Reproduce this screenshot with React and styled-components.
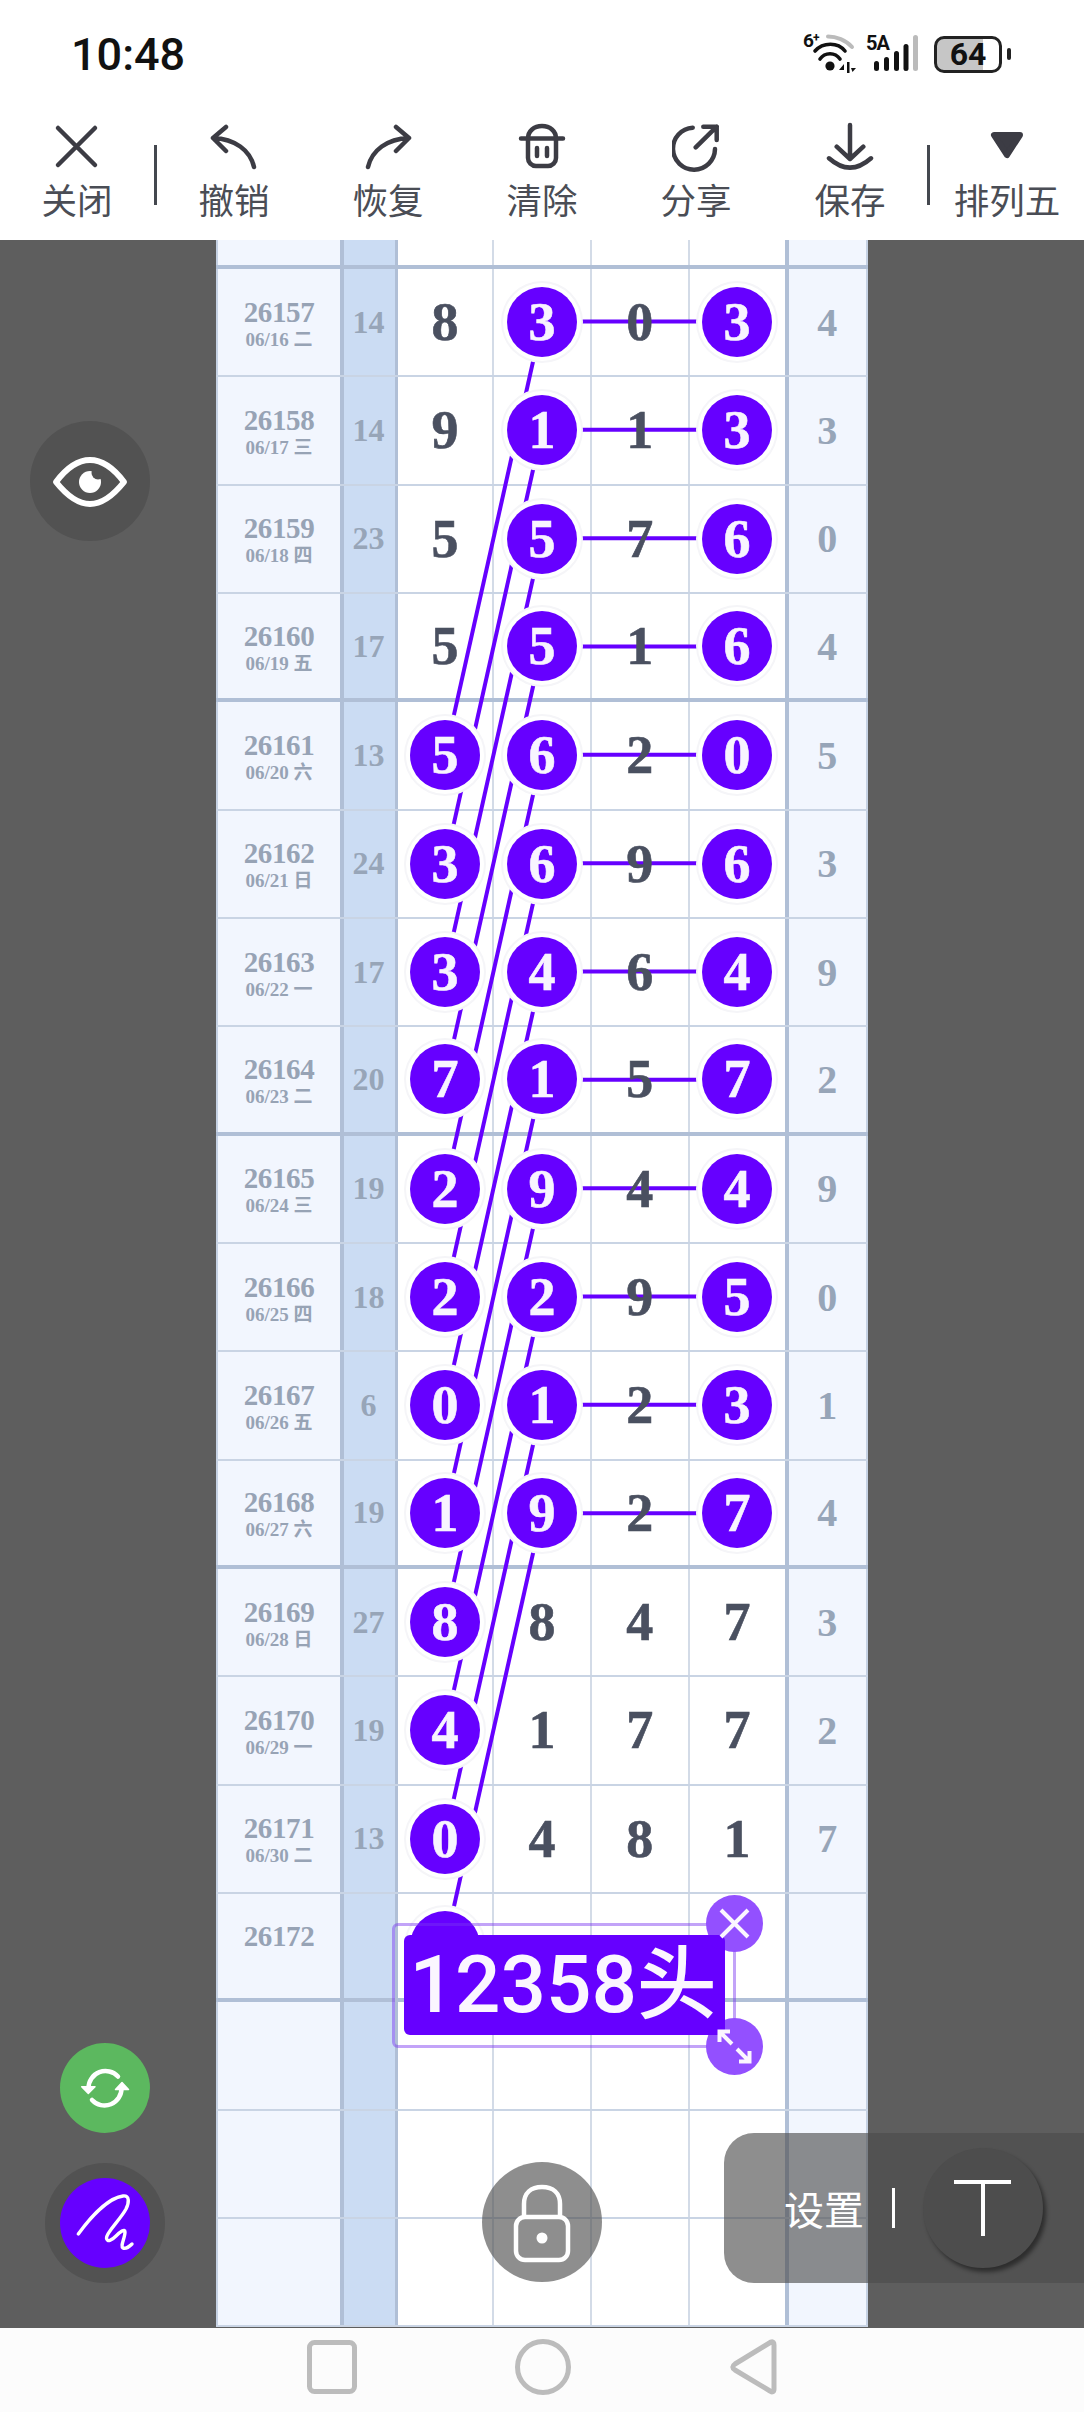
import styled, { createGlobalStyle } from "styled-components";

const ROW_H = 108.33;
const TOP_STUB = 29;
const COL1 = 229;
const COL2 = 326;
const COL4 = 521;

const draws = [
  { id: "26157", date: "06/16 二", sum: "14", nums: ["8", "3", "0", "3"], hits: [1, 3], tail: "4" },
  { id: "26158", date: "06/17 三", sum: "14", nums: ["9", "1", "1", "3"], hits: [1, 3], tail: "3" },
  { id: "26159", date: "06/18 四", sum: "23", nums: ["5", "5", "7", "6"], hits: [1, 3], tail: "0" },
  { id: "26160", date: "06/19 五", sum: "17", nums: ["5", "5", "1", "6"], hits: [1, 3], tail: "4" },
  { id: "26161", date: "06/20 六", sum: "13", nums: ["5", "6", "2", "0"], hits: [0, 1, 3], tail: "5" },
  { id: "26162", date: "06/21 日", sum: "24", nums: ["3", "6", "9", "6"], hits: [0, 1, 3], tail: "3" },
  { id: "26163", date: "06/22 一", sum: "17", nums: ["3", "4", "6", "4"], hits: [0, 1, 3], tail: "9" },
  { id: "26164", date: "06/23 二", sum: "20", nums: ["7", "1", "5", "7"], hits: [0, 1, 3], tail: "2" },
  { id: "26165", date: "06/24 三", sum: "19", nums: ["2", "9", "4", "4"], hits: [0, 1, 3], tail: "9" },
  { id: "26166", date: "06/25 四", sum: "18", nums: ["2", "2", "9", "5"], hits: [0, 1, 3], tail: "0" },
  { id: "26167", date: "06/26 五", sum: "6", nums: ["0", "1", "2", "3"], hits: [0, 1, 3], tail: "1" },
  { id: "26168", date: "06/27 六", sum: "19", nums: ["1", "9", "2", "7"], hits: [0, 1, 3], tail: "4" },
  { id: "26169", date: "06/28 日", sum: "27", nums: ["8", "8", "4", "7"], hits: [0], tail: "3" },
  { id: "26170", date: "06/29 一", sum: "19", nums: ["4", "1", "7", "7"], hits: [0], tail: "2" },
  { id: "26171", date: "06/30 二", sum: "13", nums: ["0", "4", "8", "1"], hits: [0], tail: "7" },
  { id: "26172", date: "", sum: "", nums: ["", "", "", ""], hits: [0], tail: "" },
  { id: "", date: "", sum: "", nums: ["", "", "", ""], hits: [], tail: "" },
  { id: "", date: "", sum: "", nums: ["", "", "", ""], hits: [], tail: "" },
  { id: "", date: "", sum: "", nums: ["", "", "", ""], hits: [], tail: "" },
];

const rowY = (i) => TOP_STUB + ROW_H * i + 52.5;

export default function App() {
  return (
    <Page>
      <GlobalStyle />
      <StatusBar>
        <Clock>10:48</Clock>
        <StatusIcons>
          <svg width="56" height="64" viewBox="0 -10 56 64">
            <text x="3" y="15" fontFamily="Roboto" fontSize="19" fontWeight="700" fill="#111">6</text>
            <text x="13" y="10" fontFamily="Roboto" fontSize="12" fontWeight="700" fill="#111">+</text>
            <path d="M28 4.5C36 4.5 46 8 52 15" fill="none" stroke="#bbb" strokeWidth="4" strokeLinecap="round" />
            <path d="M15 19C23 10 38 10 45 19" fill="none" stroke="#111" strokeWidth="3.6" strokeLinecap="round" />
            <path d="M20 27C25 20 35 20 40 27" fill="none" stroke="#111" strokeWidth="3.6" strokeLinecap="round" />
            <circle cx="30" cy="34" r="4.6" fill="#111" />
            <path d="M39 38L44 32V38ZM47 30H49.5V41H47ZM51 36H56L52.5 40Z" fill="#111" />
          </svg>
          <svg width="56" height="64" viewBox="0 -10 56 64">
            <text x="2" y="18" fontFamily="Roboto" fontSize="20" fontWeight="700" textLength="24" fill="#111">5A</text>
            <rect x="10" y="29" width="5" height="10" rx="2.5" fill="#111" />
            <rect x="20" y="25" width="5" height="14" rx="2.5" fill="#111" />
            <rect x="30" y="19" width="5" height="20" rx="2.5" fill="#111" />
            <rect x="39.5" y="12" width="5" height="27" rx="2.5" fill="#111" />
            <rect x="49" y="3" width="5" height="36" rx="2.5" fill="#bbb" />
          </svg>
          <Battery>64</Battery>
        </StatusIcons>
      </StatusBar>

      <Toolbar>
        <ToolButton>
          <ToolIcon viewBox="0 0 48 50">
            <path d="M5 6L42 43M42 6L5 43" />
          </ToolIcon>
          <ToolLabel>关闭</ToolLabel>
        </ToolButton>
        <ToolDivider />
        <ToolButton>
          <ToolIcon viewBox="0 0 48 50">
            <path d="M16 5L3 16L16 29M3 16C25 17 40 28 44 45" />
          </ToolIcon>
          <ToolLabel>撤销</ToolLabel>
        </ToolButton>
        <ToolButton>
          <ToolIcon viewBox="0 0 48 50">
            <path d="M32 5L45 16L32 29M45 16C23 17 8 28 4 45" />
          </ToolIcon>
          <ToolLabel>恢复</ToolLabel>
        </ToolButton>
        <ToolButton>
          <ToolIcon viewBox="0 0 48 50">
            <path d="M3 16.5H45M10 16.5C10 9 16 4 24 4S38 9 38 16.5V36A8 8 0 0 1 30 44H18A8 8 0 0 1 10 36ZM19 26V34M29 26V34" />
          </ToolIcon>
          <ToolLabel>清除</ToolLabel>
        </ToolButton>
        <ToolButton>
          <ToolIcon viewBox="0 0 48 50">
            <path d="M20.7 5.7A21 21 0 1 0 43 27M23.7 25.3L44.7 4.7M31.3 4.7H44.7V18" />
          </ToolIcon>
          <ToolLabel>分享</ToolLabel>
        </ToolButton>
        <ToolButton>
          <ToolIcon viewBox="0 0 48 50">
            <path d="M24 3V36M10.7 24.7L24 37L37.3 24.7M3 36.3Q24 55 45 36.3" />
          </ToolIcon>
          <ToolLabel>保存</ToolLabel>
        </ToolButton>
        <ToolDivider />
        <ToolButton>
          <ToolIcon viewBox="0 0 48 50">
            <path d="M11 13H37L24 33Z" fill="#3c3c44" strokeWidth="6" />
          </ToolIcon>
          <ToolLabel>排列五</ToolLabel>
        </ToolButton>
      </Toolbar>

      <Main>
        <Table>
          <Row $thick $height={TOP_STUB}>
            <IdCell />
            <SumCell />
            <DigitCell />
            <DigitCell />
            <DigitCell />
            <LastDigitCell />
            <TailCell />
          </Row>
          {draws.map((d, i) => (
            <Row key={i} $thick={i % 4 === 3} $height={ROW_H}>
              <IdCell>
                {d.id && <IdText>{d.id}</IdText>}
                {d.id && <DateText>{d.date || "\u00a0"}</DateText>}
              </IdCell>
              <SumCell>{d.sum}</SumCell>
              {d.nums.map((n, c) => {
                const Cell = c === 3 ? LastDigitCell : DigitCell;
                return (
                  <Cell key={c}>
                    {d.hits.includes(c) ? <Ball>{n}</Ball> : <Digit>{n}</Digit>}
                  </Cell>
                );
              })}
              <TailCell>{d.tail}</TailCell>
            </Row>
          ))}
          <ChartLines width="652" height="2100" viewBox="0 0 652 2100">
            {draws.slice(0, 12).map((d, i) => (
              <g key={i}>
                <line x1={COL2} y1={rowY(i)} x2={COL1} y2={rowY(i + 4)} />
                <line x1={COL2} y1={rowY(i)} x2={COL4} y2={rowY(i)} />
              </g>
            ))}
          </ChartLines>
        </Table>

        <EyeButton>
          <svg width="120" height="120" viewBox="0 0 120 120">
            <path d="M26 61C38 45 50 39 60 39S82 45 94 61C82 76 70 83 60 83S38 76 26 61Z" fill="none" stroke="#fff" strokeWidth="6" strokeLinejoin="round" />
            <circle cx="60" cy="61" r="11" fill="#fff" />
            <circle cx="68" cy="52" r="6.5" fill="#525252" />
          </svg>
        </EyeButton>

        <RefreshButton>
          <svg width="90" height="90" viewBox="0 0 90 90" fill="none" stroke="#fff" strokeWidth="4.5" strokeLinecap="round">
            <path d="M28.5 45A17 17 0 0 1 58 33.5" />
            <path d="M61.5 45A17 17 0 0 1 32 57" />
            <path d="M21.7 43.7H35L28.3 50.5Z" fill="#fff" stroke="#fff" strokeWidth="1.5" strokeLinejoin="round" />
            <path d="M55.5 46.5H68.5L62 39.5Z" fill="#fff" stroke="#fff" strokeWidth="1.5" strokeLinejoin="round" />
          </svg>
        </RefreshButton>

        <PenRing>
          <PenButton>
            <svg width="90" height="90" viewBox="0 0 90 90">
              <path d="M18.3 56C30 40 48 20 63 18C70 17 69 25 66 31C60 42 46 55 46.5 60C47 65 52 62 56 58C60 54 65 50 65 54C65 60 60 68 63 70C65 71 69 69 72 66" fill="none" stroke="#fff" strokeWidth="3.4" strokeLinecap="round" />
            </svg>
          </PenButton>
        </PenRing>

        <LockButton>
          <svg width="120" height="120" viewBox="0 0 120 120" fill="none" stroke="#fff" strokeWidth="4.5">
            <path d="M42 56V42C42 31 49 25 60 25S78 31 78 42V56" />
            <rect x="34" y="55" width="52" height="43" rx="9" />
            <circle cx="60" cy="76" r="5.5" fill="#fff" stroke="none" />
          </svg>
        </LockButton>

        <SettingsPanel>
          <SettingsText>设置</SettingsText>
          <SettingsDivider />
          <TextToolButton>
            <svg width="120" height="120" viewBox="0 0 120 120">
              <path d="M31 34H88M60 34V88" fill="none" stroke="#fff" strokeWidth="4" />
            </svg>
          </TextToolButton>
        </SettingsPanel>

        <Sticker>
          <Handle $pos="top" />
          <Handle $pos="bottom" />
          <StickerLabel>12358头</StickerLabel>
          <HandleGlyph $pos="top" viewBox="0 0 57 57">
            <path d="M15 15L42 42M42 15L15 42" />
          </HandleGlyph>
          <HandleGlyph $pos="bottom" viewBox="0 0 57 57">
            <path d="M13.5 13.5L26 26M31 31L43.5 43.5M13.5 24V13.5H24M43.5 33V43.5H33" />
          </HandleGlyph>
        </Sticker>
      </Main>

      <NavBar>
        <svg width="50" height="54" viewBox="0 0 50 54">
          <rect x="2.5" y="2.5" width="45" height="49" rx="5" fill="none" stroke="#bcbcbc" strokeWidth="5" />
        </svg>
        <svg width="56" height="58" viewBox="0 0 56 58">
          <circle cx="28" cy="29" r="25.5" fill="none" stroke="#bcbcbc" strokeWidth="5" />
        </svg>
        <svg width="48" height="60" viewBox="0 0 48 60">
          <path d="M42 5C44 4 45 6 45 8V52C45 55 43 56 41 54L6 33C3 31 3 29 6 27Z" fill="none" stroke="#bcbcbc" strokeWidth="5" strokeLinejoin="round" />
        </svg>
      </NavBar>
    </Page>
  );
}

const GlobalStyle = createGlobalStyle`
  html, body {
    margin: 0;
    padding: 0;
    background: #fff;
  }
  * {
    box-sizing: border-box;
  }
`;

const Page = styled.div`
  display: flex;
  flex-direction: column;
  width: 1084px;
  height: 2412px;
  overflow: hidden;
  font-family: "Noto Sans CJK SC", "Noto Sans", sans-serif;
`;

const StatusBar = styled.div`
  display: flex;
  justify-content: space-between;
  align-items: center;
  height: 100px;
  padding: 8px 82px 0 71px;
  background: #fff;
`;

const Clock = styled.div`
  font-family: Roboto, sans-serif;
  font-size: 45px;
  font-weight: 500;
  color: #111;
`;

const StatusIcons = styled.div`
  display: flex;
  align-items: center;
  gap: 8px;
`;

const Battery = styled.div`
  position: relative;
  width: 68px;
  height: 37px;
  margin-left: 6px;
  border: 3.5px solid #222;
  border-radius: 10px;
  background: linear-gradient(90deg, #c6c6c6 74%, #fff 74%);
  font-family: Roboto, sans-serif;
  font-size: 32px;
  font-weight: 700;
  line-height: 30px;
  text-align: center;
  color: #111;

  &::after {
    content: "";
    position: absolute;
    top: 9px;
    right: -12px;
    width: 4px;
    height: 12px;
    border-radius: 2px;
    background: #222;
  }
`;

const Toolbar = styled.div`
  display: flex;
  height: 140px;
  background: #fff;
`;

const ToolButton = styled.div`
  display: flex;
  flex-direction: column;
  align-items: center;
  width: 154px;
  padding-top: 22px;
`;

const ToolIcon = styled.svg`
  width: 48px;
  height: 50px;
  fill: none;
  stroke: #3c3c44;
  stroke-width: 4.5;
  stroke-linecap: round;
  stroke-linejoin: round;
`;

const ToolLabel = styled.div`
  margin-top: 9px;
  font-size: 35.5px;
  line-height: 36px;
  color: #4a4d55;
  white-space: nowrap;
`;

const ToolDivider = styled.div`
  flex: none;
  width: 3px;
  height: 60px;
  margin-top: 45px;
  background: #44484f;
`;

const Main = styled.div`
  position: relative;
  flex: 1;
  min-height: 0;
  overflow: hidden;
  background: #5e5e5e;
`;

const Table = styled.div`
  position: relative;
  width: 652px;
  margin: 0 auto;
`;

const Row = styled.div`
  display: grid;
  grid-template-columns: 128px 54px 96px 98px 97.5px 99px 79.5px;
  height: ${(p) => p.$height}px;
  background: #fff;
  border-bottom: ${(p) => (p.$thick ? "4px solid #b0bfd6" : "2px solid #c9d4e4")};
`;

const IdCell = styled.div`
  display: flex;
  flex-direction: column;
  align-items: center;
  justify-content: center;
  padding-top: 4px;
  background: #f2f6fe;
  border-left: 2px solid #c5d1e3;
  border-right: 4px solid #b0bfd6;
  color: #97a3b5;
  font-family: "Liberation Serif", "Noto Sans CJK SC", serif;
  font-weight: 700;
`;

const IdText = styled.div`
  font-size: 29px;
  line-height: 30px;
  letter-spacing: -0.4px;
`;

const DateText = styled.div`
  font-size: 19px;
  line-height: 25px;
  font-weight: 700;
`;

const SumCell = styled.div`
  display: flex;
  align-items: center;
  justify-content: center;
  padding-right: 2px;
  background: #cbdcf3;
  border-right: 3.5px solid #b0bfd6;
  color: #97a5b8;
  font-family: "Liberation Serif", serif;
  font-weight: 700;
  font-size: 32px;
`;

const DigitCell = styled.div`
  display: flex;
  align-items: center;
  justify-content: center;
  border-right: 2px solid #d3dbe7;
`;

const LastDigitCell = styled(DigitCell)`
  border-right: 4px solid #b0bfd6;
`;

const TailCell = styled.div`
  display: flex;
  align-items: center;
  justify-content: center;
  background: #f2f6fe;
  border-right: 2px solid #c5d1e3;
  color: #97a5b8;
  font-family: "Liberation Serif", serif;
  font-weight: 700;
  font-size: 40px;
`;

const Digit = styled.span`
  position: relative;
  z-index: 2;
  font-family: "Liberation Serif", serif;
  font-weight: 700;
  font-size: 54px;
  line-height: 1;
  color: #4a5060;
  -webkit-text-stroke: 0.6px #4a5060;
`;

const Ball = styled.span`
  position: relative;
  z-index: 2;
  display: flex;
  align-items: center;
  justify-content: center;
  width: 70px;
  height: 70px;
  border-radius: 50%;
  background: #6600ff;
  box-shadow: 0 0 0 4px #fff, 0 0 0 6px #f5f5f8;
  font-family: "Liberation Serif", serif;
  font-weight: 700;
  font-size: 54px;
  line-height: 1;
  color: #f8f4ff;
  -webkit-text-stroke: 0.6px #f8f4ff;
`;

const ChartLines = styled.svg`
  position: absolute;
  top: 0;
  left: 0;
  z-index: 1;

  line {
    stroke: #6600ff;
    stroke-width: 4;
  }
`;

const overlayFill = "rgba(75, 75, 75, 0.627)";

const EyeButton = styled.div`
  position: absolute;
  left: 30px;
  top: 181px;
  width: 120px;
  height: 120px;
  border-radius: 50%;
  background: ${overlayFill};
`;

const RefreshButton = styled.div`
  position: absolute;
  left: 60px;
  top: 1803px;
  width: 90px;
  height: 90px;
  border-radius: 50%;
  background: #5cb85f;
`;

const PenRing = styled.div`
  position: absolute;
  left: 45px;
  top: 1923px;
  display: flex;
  align-items: center;
  justify-content: center;
  width: 120px;
  height: 120px;
  border-radius: 50%;
  background: ${overlayFill};
`;

const PenButton = styled.div`
  width: 90px;
  height: 90px;
  border-radius: 50%;
  background: #6600ff;
`;

const LockButton = styled.div`
  position: absolute;
  left: 482px;
  top: 1922px;
  z-index: 3;
  width: 120px;
  height: 120px;
  border-radius: 50%;
  background: ${overlayFill};
`;

const SettingsPanel = styled.div`
  position: absolute;
  left: 724px;
  right: 0;
  top: 1893px;
  z-index: 3;
  display: flex;
  align-items: center;
  height: 150px;
  padding-left: 60px;
  border-radius: 30px 0 0 30px;
  background: ${overlayFill};
`;

const SettingsText = styled.div`
  font-size: 40px;
  line-height: 40px;
  color: #fff;
  white-space: nowrap;
`;

const SettingsDivider = styled.div`
  width: 3px;
  height: 40px;
  margin-left: 28px;
  background: #fff;
`;

const TextToolButton = styled.div`
  width: 120px;
  height: 120px;
  margin-left: 28px;
  border-radius: 50%;
  background: #4d4d4d;
  box-shadow: 3px 4px 4px rgba(0, 0, 0, 0.45);
`;

const Sticker = styled.div`
  position: absolute;
  left: 392px;
  top: 1683px;
  z-index: 3;
  width: 344px;
  height: 125px;
  padding: 8.5px;
  border: 3.5px solid rgba(120, 50, 240, 0.45);
  border-radius: 6px;
`;

const StickerLabel = styled.div`
  position: relative;
  display: flex;
  align-items: center;
  height: 100px;
  padding-left: 6px;
  border-radius: 6px;
  background: #6600ff;
  font-family: Roboto, "Noto Sans CJK SC", sans-serif;
  font-size: 80px;
  font-weight: 500;
  line-height: 1;
  color: #fbf6ff;
  white-space: nowrap;
`;

const Handle = styled.div`
  position: absolute;
  left: 311px;
  top: ${(p) => (p.$pos === "top" ? "-31px" : "92px")};
  width: 57px;
  height: 57px;
  border-radius: 50%;
  background: #9350ff;
`;

const HandleGlyph = styled.svg`
  position: absolute;
  left: 311px;
  top: ${(p) => (p.$pos === "top" ? "-31px" : "92px")};
  width: 57px;
  height: 57px;
  fill: none;
  stroke: #fbf6ff;
  stroke-width: 4;
`;

const NavBar = styled.div`
  display: flex;
  align-items: center;
  justify-content: center;
  gap: 158px;
  height: 84px;
  padding: 0 0 6px 0;
  background: #fcfcfc;
`;
